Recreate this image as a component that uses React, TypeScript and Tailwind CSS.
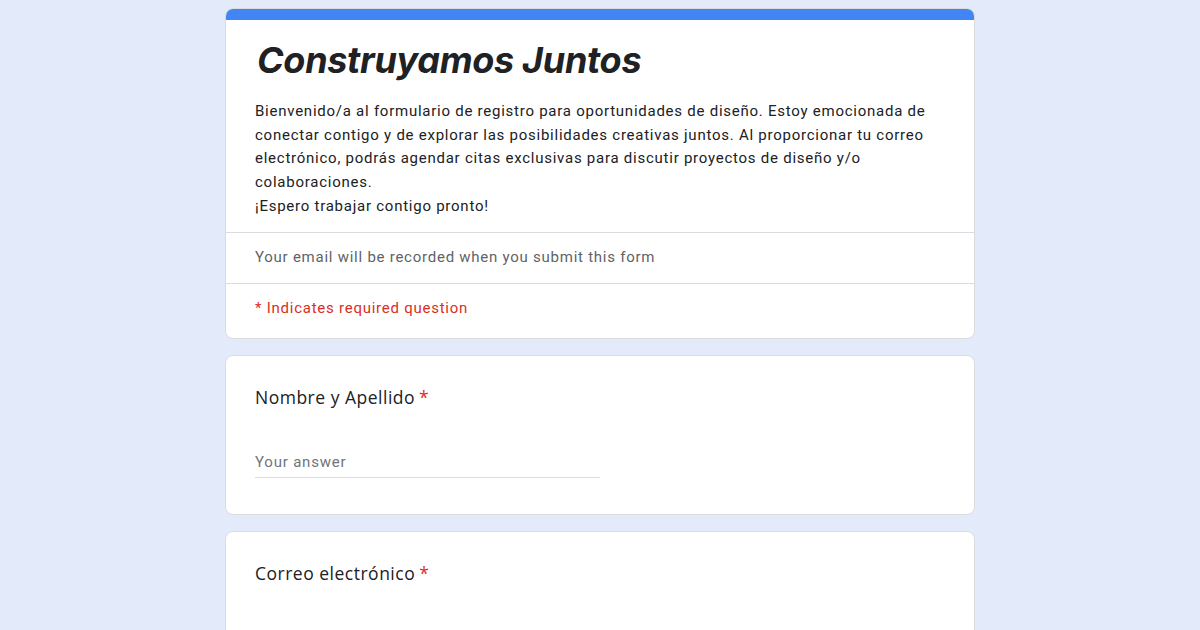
import React from 'react';

const Required = () => <span className="text-[#d93025] ml-[4px]">*</span>;

const QuestionCard = ({ label, children }: { label: string; children?: React.ReactNode }) => (
  <div className="bg-white rounded-[8px] border border-[#dadce0] px-[29px] pt-[29px] pb-[36px]">
    <div
      className="text-[17.5px] text-[#202124] leading-[24px] tracking-[0.5px]"
      style={{ fontFamily: '"Open Sans", "Noto Sans", sans-serif' }}
    >
      {label}
      <Required />
    </div>
    {children}
  </div>
);

export default function App() {
  return (
    <div className="min-h-screen w-full bg-[#e3ebfa] flex justify-center" style={{ fontFamily: 'Roboto, "Liberation Sans", sans-serif' }}>
      <div className="w-[750px] pt-[8px] flex flex-col gap-[16px]">
        <div className="bg-white rounded-[8px] border border-[#dadce0] overflow-hidden">
          <div className="h-[11px] bg-[#4285f4]" />
          <div className="px-[29px] pt-[17px] pb-[13px]">
            <h1
              className="text-[36px] font-bold italic text-[#202124] leading-[46px] tracking-[-0.3px] pl-[2px]"
              style={{ fontFamily: 'Inter, "Open Sans", sans-serif' }}
            >
              Construyamos Juntos
            </h1>
            <p className="mt-[17px] text-[15px] leading-[23.7px] text-[#202124] tracking-[0.75px]">
              Bienvenido/a al formulario de registro para oportunidades de diseño. Estoy emocionada de conectar contigo y de explorar las posibilidades creativas juntos. Al proporcionar tu correo electrónico, podrás agendar citas exclusivas para discutir proyectos de diseño y/o colaboraciones.
              <br />
              ¡Espero trabajar contigo pronto!
            </p>
          </div>
          <div className="border-t border-[#dadce0] px-[29px] h-[51px] flex items-center text-[15px] text-[#5f6368] tracking-[0.75px]">
            Your email will be recorded when you submit this form
          </div>
          <div className="border-t border-[#dadce0] px-[29px] h-[55px] flex items-center text-[15px] text-[#d93025] pb-[5px] tracking-[0.75px]">
            * Indicates required question
          </div>
        </div>

        <QuestionCard label="Nombre y Apellido">
          <div className="mt-[42px] w-[345px] border-b border-[#dadce0] pb-[4px] text-[15px] text-[#70757a] tracking-[0.8px]">
            Your answer
          </div>
        </QuestionCard>

        <QuestionCard label="Correo electrónico">
          <div className="h-[120px]" />
        </QuestionCard>
      </div>
    </div>
  );
}
